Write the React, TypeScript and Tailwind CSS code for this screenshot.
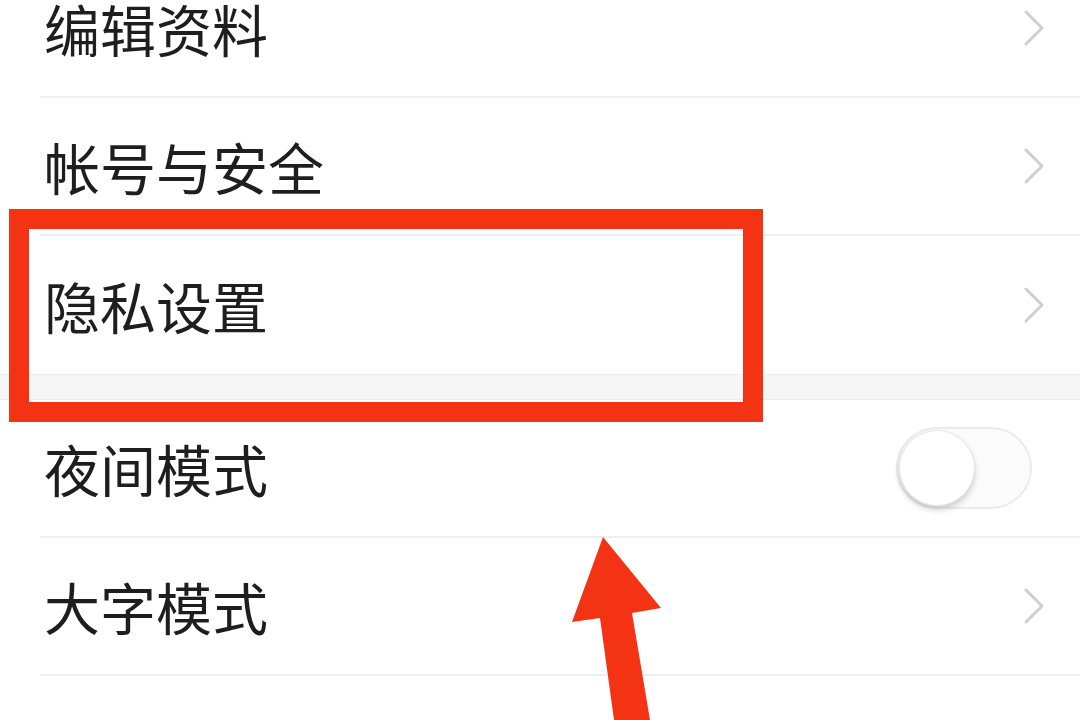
import type { ReactNode } from "react";

type Row = {
  label: string;
  kind: "link" | "toggle";
};

const topGroup: Row[] = [
  { label: "编辑资料", kind: "link" },
  { label: "帐号与安全", kind: "link" },
  { label: "隐私设置", kind: "link" },
];

const bottomGroup: Row[] = [
  { label: "夜间模式", kind: "toggle" },
  { label: "大字模式", kind: "link" },
  { label: "", kind: "link" },
];

function Chevron() {
  return (
    <svg width="24" height="40" viewBox="0 0 24 40" fill="none" aria-hidden>
      <path
        d="M4 4 L20 20 L4 36"
        stroke="#cfcfcf"
        strokeWidth="3"
        strokeLinecap="round"
        strokeLinejoin="round"
      />
    </svg>
  );
}

function Toggle() {
  return (
    <div className="relative h-[82px] w-[136px] rounded-full border-2 border-[#ebebeb] bg-[#fbfbfb]">
      <div className="absolute left-[1px] top-[1px] h-[76px] w-[76px] rounded-full border border-[#e6e6e6] bg-white shadow-[0_4px_6px_rgba(0,0,0,0.18)]" />
    </div>
  );
}

function SettingRow({ row, last }: { row: Row; last?: boolean }) {
  let trailing: ReactNode = null;
  if (row.kind === "link") trailing = <Chevron />;
  if (row.kind === "toggle") trailing = <Toggle />;

  return (
    <div className="pl-10">
      <div
        className={`flex h-[138px] items-center justify-between pr-[34px] ${
          last ? "" : "border-b-2 border-[#efefef]"
        }`}
      >
        <span className="pl-1 text-[56px] leading-none text-[#1e1e1e]">
          {row.label}
        </span>
        <div className={row.kind === "toggle" ? "mr-[14px]" : ""}>
          {trailing}
        </div>
      </div>
    </div>
  );
}

function Arrow() {
  return (
    <svg
      className="absolute left-0 top-0"
      width="1080"
      height="720"
      viewBox="0 0 1080 720"
      aria-hidden
    >
      <polygon
        fill="#f43314"
        points="603,537 661,608 632,613 650,720 614,720 600,618 572,622"
      />
    </svg>
  );
}

export default function App() {
  return (
    <div
      className="relative h-[720px] w-[1080px] overflow-hidden bg-white"
      style={{ fontFamily: '"Noto Sans CJK SC", "Noto Sans", sans-serif' }}
    >
      <div className="-mt-[40px]">
        {topGroup.map((row, i) => (
          <SettingRow key={row.label} row={row} last={i === topGroup.length - 1} />
        ))}
        <div className="h-[26px] border-y border-[#ececec] bg-[#f6f6f6]" />
        {bottomGroup.map((row, i) => (
          <SettingRow key={i} row={row} />
        ))}
      </div>

      <div className="absolute left-[9px] top-[209px] h-[213px] w-[754px] border-[20px] border-[#f43314]" />
      <Arrow />
    </div>
  );
}
